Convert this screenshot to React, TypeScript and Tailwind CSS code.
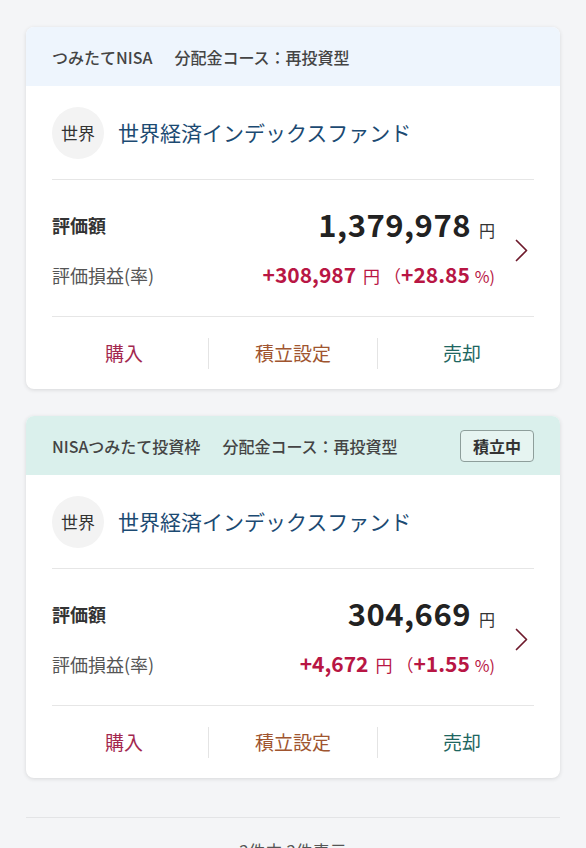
type Holding = {
  account: string;
  course: string;
  headerBg: string;
  badge?: string;
  fund: string;
  short: string;
  value: string;
  gain: string;
  rate: string;
};

const holdings: Holding[] = [
  {
    account: "つみたてNISA",
    course: "分配金コース：再投資型",
    headerBg: "bg-[#eef5fd]",
    fund: "世界経済インデックスファンド",
    short: "世界",
    value: "1,379,978",
    gain: "+308,987",
    rate: "+28.85",
  },
  {
    account: "NISAつみたて投資枠",
    course: "分配金コース：再投資型",
    headerBg: "bg-[#daf0ec]",
    badge: "積立中",
    fund: "世界経済インデックスファンド",
    short: "世界",
    value: "304,669",
    gain: "+4,672",
    rate: "+1.55",
  },
];

function Chevron() {
  return (
    <svg width="13" height="23" viewBox="0 0 13 23" fill="none">
      <path d="M1.5 1.5 L11.5 11.5 L1.5 21.5" stroke="#6e1a2c" strokeWidth="1.7" strokeLinecap="round" strokeLinejoin="round" />
    </svg>
  );
}

function HoldingCard({ h }: { h: Holding }) {
  return (
    <div className="overflow-hidden rounded-lg bg-white shadow-[0_1px_4px_rgba(0,0,0,0.12)]">
      {/* Account header */}
      <div className={`flex h-[59px] items-center justify-between px-[26px] ${h.headerBg}`}>
        <div className="text-[16px] font-medium text-[#444]">
          <span>{h.account}</span>
          <span className="ml-[22px]">{h.course}</span>
        </div>
        {h.badge && (
          <span className="flex h-[32px] w-[74px] items-center justify-center rounded-[4px] border border-[#8e9e9b] bg-[#e6f4f1] text-[16px] font-bold text-[#333]">
            {h.badge}
          </span>
        )}
      </div>

      <div className="px-[26px]">
        {/* Fund name */}
        <div className="flex items-center gap-[14px] pb-[20px] pt-[21px]">
          <div className="flex h-[52px] w-[52px] items-center justify-center rounded-full bg-[#f3f3f3] text-[17px] text-[#333]">
            {h.short}
          </div>
          <div className="text-[21px] text-[#1c4a72]">{h.fund}</div>
        </div>
        <div className="h-px bg-[#e6e6e6]" />

        {/* Valuation */}
        <div className="flex items-center pb-[26px] pt-[30px]">
          <div className="flex flex-1 flex-col gap-[20px]">
            <div className="flex h-[30px] items-center justify-between">
              <span className="text-[18px] font-bold text-[#333]">評価額</span>
              <span className="flex items-baseline">
                <span className="text-[31px] font-bold leading-none tracking-[0.5px] text-[#222]">{h.value}</span>
                <span className="ml-[8px] text-[16px] text-[#333]">円</span>
              </span>
            </div>
            <div className="flex h-[30px] items-center justify-between">
              <span className="text-[18px] text-[#555]">評価損益(率)</span>
              <span className="flex items-baseline text-[#b81644]">
                <span className="text-[21px] font-bold">{h.gain}</span>
                <span className="ml-[7px] text-[17px]">円</span>
                <span className="ml-[4px] text-[17px]">（</span>
                <span className="text-[21px] font-bold">{h.rate}</span>
                <span className="ml-[5px] text-[16px]">%)</span>
              </span>
            </div>
          </div>
          <div className="flex w-[39px] justify-end pr-[6px]">
            <Chevron />
          </div>
        </div>
        <div className="h-px bg-[#e6e6e6]" />
      </div>

      {/* Actions */}
      <div className="flex h-[72px] items-center px-[14px] text-[19px]">
        <button className="flex-1 text-center text-[#a3284f]">購入</button>
        <span className="h-[31px] w-px bg-[#e4e4e4]" />
        <button className="flex-1 text-center text-[#a0552f]">積立設定</button>
        <span className="h-[31px] w-px bg-[#e4e4e4]" />
        <button className="flex-1 text-center text-[#1e6661]">売却</button>
      </div>
    </div>
  );
}

export default function App() {
  return (
    <div
      className="min-h-screen bg-[#f4f5f7] px-[26px] pt-[27px]"
      style={{ fontFamily: '"Noto Sans CJK JP", "Noto Sans", sans-serif' }}
    >
      <div className="flex flex-col gap-[27px]">
        {holdings.map((h, idx) => (
          <HoldingCard key={idx} h={h} />
        ))}
      </div>
      <div className="mt-[39px] h-px bg-[#e3e4e6]" />
      <div className="pt-[20px] pb-[20px] text-center text-[17px] text-[#555]">2件中 2件表示</div>
    </div>
  );
}
